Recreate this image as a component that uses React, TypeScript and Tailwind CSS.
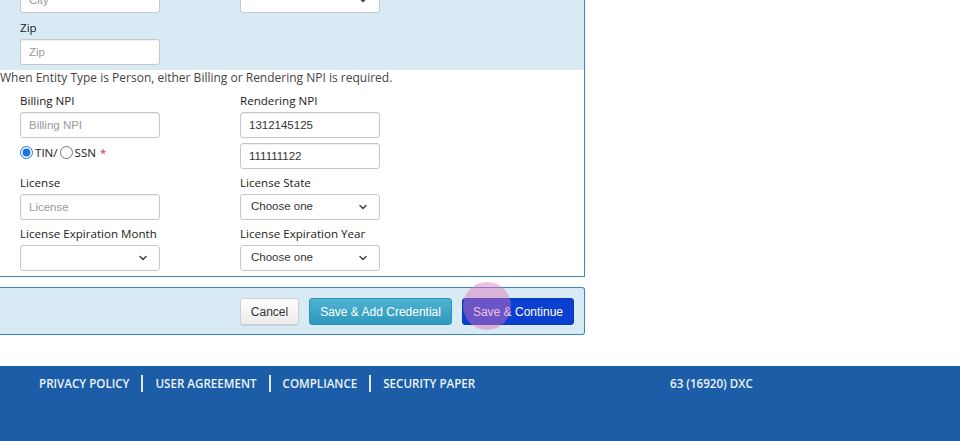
import { ChevronDown } from 'lucide-react'

const LABEL = "whitespace-nowrap font-['Open_Sans',sans-serif] text-[11.6px] leading-[16px] text-[#222]"
const INPUT =
  "block h-[26px] w-[140px] rounded-[3px] border border-[#c7c7c7] bg-white px-[8px] font-['Liberation_Sans',Arial,sans-serif] text-[11.5px] text-[#333] placeholder:text-[#9a9a9a] shadow-[inset_0_1px_1px_rgba(0,0,0,0.06)] outline-none"

function Field({ label, placeholder, value }: { label?: string; placeholder?: string; value?: string }) {
  return (
    <div className="w-[140px]">
      {label && <div className={`${LABEL} mb-[3px]`}>{label}</div>}
      <input className={INPUT} placeholder={placeholder} defaultValue={value} />
    </div>
  )
}

function Select({ label, value }: { label?: string; value?: string }) {
  return (
    <div className="w-[140px]">
      {label && <div className={`${LABEL} mb-[3px]`}>{label}</div>}
      <div className="relative flex h-[26px] w-[140px] items-center rounded-[3px] border border-[#c7c7c7] bg-white px-[10px] font-['Liberation_Sans',Arial,sans-serif] text-[11.5px] text-[#333]">
        <span className="flex-1">{value}</span>
        <ChevronDown size={12} strokeWidth={3} className="text-[#444]" />
      </div>
    </div>
  )
}

export default function App() {
  return (
    <div className="relative h-[441px] w-[960px] overflow-hidden bg-white">
      {/* credential form panel, left edge scrolled off screen */}
      <div className="-mt-[13px] w-[585px] border-r border-b border-[#3a86bf]">
        <div className="bg-[#d8ebf5] pl-[20px] pb-[5px]">
          <div className="grid grid-cols-[220px_140px]">
            <Field placeholder="City" />
            <Select />
          </div>
          <div className="mt-[7px]">
            <Field label="Zip" placeholder="Zip" />
          </div>
        </div>
        <div className="pb-[5px]">
          <div className="font-['Open_Sans',sans-serif] text-[12px] leading-[16px] text-[#444]">
            When Entity Type is Person, either Billing or Rendering NPI is required.
          </div>
          <div className="mt-[7px] grid grid-cols-[220px_140px] gap-y-[6px] pl-[20px]">
            <Field label="Billing NPI" placeholder="Billing NPI" />
            <Field label="Rendering NPI" value="1312145125" />
            <div className="-mt-[1px] flex h-[26px] items-start pt-[2px] font-['Open_Sans',sans-serif] text-[11.6px] leading-[16px] text-[#222]">
              <input type="radio" defaultChecked className="m-0 mr-[2px] h-[13px] w-[13px] translate-y-[1px] accent-[#1a73e8]" />
              <span>TIN/</span>
              <input type="radio" className="m-0 mr-[2px] ml-[2px] h-[13px] w-[13px] translate-y-[1px]" />
              <span>SSN</span>
              <span className="ml-[4px] text-[#d9322c]">*</span>
            </div>
            <div className="-mt-[1px]">
              <Field value="111111122" />
            </div>
            <Field label="License" placeholder="License" />
            <Select label="License State" value="Choose one" />
            <Select label="License Expiration Month" />
            <Select label="License Expiration Year" value="Choose one" />
          </div>
        </div>
      </div>

      {/* action bar */}
      <div className="mt-[10px] flex h-[48px] w-[585px] items-start justify-end gap-[10px] rounded-r-[3px] border border-l-0 border-[#3a86bf] bg-[#d8ebf5] pt-[10px] pr-[10px] font-['Liberation_Sans',Arial,sans-serif] text-[12px]">
        <button className="h-[27px] rounded-[3px] border border-[#cfcfcf] bg-gradient-to-b from-white to-[#ececec] px-[10px] text-[#333] shadow-[0_1px_1px_rgba(0,0,0,0.12)]">
          Cancel
        </button>
        <button className="h-[27px] rounded-[3px] border border-[#2f95b8] bg-gradient-to-b from-[#4fb3d2] to-[#2e98bd] px-[10px] text-white">
          Save &amp; Add Credential
        </button>
        <button className="h-[27px] rounded-[3px] border border-[#0b3ab8] bg-[#0b3fcf] px-[10px] text-white">
          Save &amp; Continue
        </button>
      </div>

      {/* click marker */}
      <div className="absolute top-[282px] left-[463px] h-[48px] w-[48px] rounded-full bg-[rgba(225,110,185,0.45)]" />

      {/* footer */}
      <footer className="absolute top-[366px] left-0 h-[75px] w-[960px] bg-[#1b5ea7] font-['Open_Sans',sans-serif] text-[11.6px] font-semibold text-[#eef3fa]">
        <div className="flex items-center pt-[9px] pl-[39px]">
          <span>PRIVACY POLICY</span>
          <span className="mx-[12px] h-[17px] w-[2px] bg-[#dfe8f4]" />
          <span>USER AGREEMENT</span>
          <span className="mx-[12px] h-[17px] w-[2px] bg-[#dfe8f4]" />
          <span>COMPLIANCE</span>
          <span className="mx-[12px] h-[17px] w-[2px] bg-[#dfe8f4]" />
          <span>SECURITY PAPER</span>
          <span className="absolute left-[670px]">63 (16920) DXC</span>
        </div>
      </footer>
    </div>
  )
}
